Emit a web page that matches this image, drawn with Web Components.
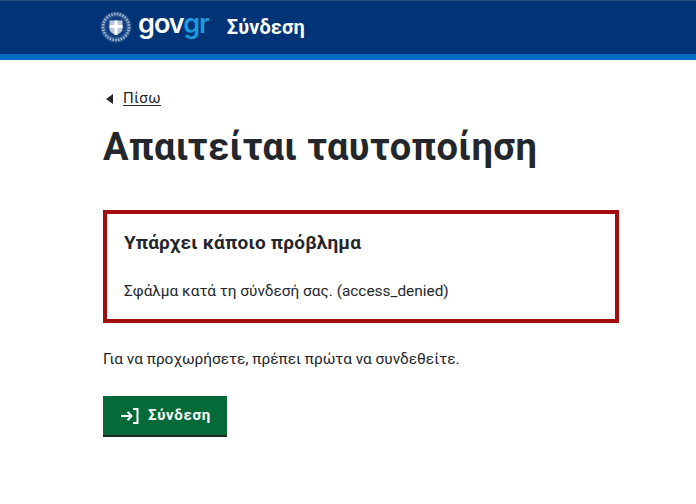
<!DOCTYPE html>
<html lang="el">
<head>
<meta charset="utf-8">
<title>Σύνδεση</title>
<style>
html, body { margin: 0; padding: 0; background: #fff; }
body { font-family: Roboto, "Noto Sans", sans-serif; color: #23262b; }
</style>
</head>
<body>
<gov-header title="Σύνδεση"></gov-header>
<gov-page>
	<gov-back>Πίσω</gov-back>
	<h1 slot="title">Απαιτείται ταυτοποίηση</h1>
	<gov-error heading="Υπάρχει κάποιο πρόβλημα">Σφάλμα κατά τη σύνδεσή σας. (access_denied)</gov-error>
	<gov-text>Για να προχωρήσετε, πρέπει πρώτα να συνδεθείτε.</gov-text>
	<gov-button>Σύνδεση</gov-button>
</gov-page>
<script>
const headerTemplate = document.createElement('template');
headerTemplate.innerHTML = `
<style>
:host {
	display: block;
	background: #003476;
	border-top: 1px solid #2a4d80;
	border-bottom: 6px solid #046ec5;
}
.bar {
	height: 53px;
	box-sizing: border-box;
	padding-left: 100px;
	display: flex;
	align-items: center;
}
svg { flex: none; display: block; margin-top: -1px; }
.logo {
	margin-left: 6px;
	margin-top: -8px;
	font: 600 27px/1 Inter, "Noto Sans", sans-serif;
	letter-spacing: -1px;
	color: #fff;
}
.logo span { color: #1c9bdc; }
.title {
	margin-left: 18px;
	margin-top: -1px;
	font: 700 20px/1 Roboto, sans-serif;
	letter-spacing: .1px;
	color: #fff;
}
</style>
<div class="bar">
	<svg width="32" height="32" viewBox="0 0 32 32" aria-hidden="true">
		<circle cx="16" cy="16" r="15.500" fill="#2c5590"/>
		<circle cx="16" cy="16" r="13" fill="none" stroke="#9db2cf" stroke-width="2.600" stroke-dasharray="1.600 1.200"/>
		<circle cx="16" cy="16" r="10.500" fill="#123f7e"/>
		<path d="M9.500 9.500h13v8.500c0 2.800-3 4.600-6.500 6-3.500-1.400-6.500-3.200-6.500-6z" fill="#b9c8dd"/>
		<path d="M14.500 9.500h3v4.500h5v3h-5v7h-3v-7h-5v-3h5z" fill="#fff"/>
	</svg>
	<div class="logo">gov<span>gr</span></div>
	<div class="title"></div>
</div>
`;

class GovHeader extends HTMLElement {
	connectedCallback() {
		if (!this.shadowRoot) {
			this.attachShadow({ mode: 'open' });
			this.shadowRoot.appendChild(headerTemplate.content.cloneNode(true));
			this.shadowRoot.querySelector('.title').textContent = this.getAttribute('title');
		}
	}
}

const pageTemplate = document.createElement('template');
pageTemplate.innerHTML = `
<style>
:host {
	display: block;
	padding: 29px 77px 0 103px;
}
.content {
	display: flex;
	flex-direction: column;
	align-items: stretch;
}
::slotted(h1) {
	margin: 14px 0 37px;
	font: 700 38px/52px Roboto, sans-serif;
	letter-spacing: .4px;
	color: #23262b;
}
</style>
<div class="content">
	<slot name="back"></slot>
	<slot name="title"></slot>
	<slot></slot>
</div>
`;

class GovPage extends HTMLElement {
	connectedCallback() {
		if (!this.shadowRoot) {
			this.attachShadow({ mode: 'open' });
			this.shadowRoot.appendChild(pageTemplate.content.cloneNode(true));
			this.querySelector('gov-back').slot = 'back';
		}
	}
}

const backTemplate = document.createElement('template');
backTemplate.innerHTML = `
<style>
:host {
	display: flex;
	align-items: center;
	height: 18px;
	font: 400 15px/18px Roboto, sans-serif;
	letter-spacing: .4px;
	color: #23262b;
}
.arrow {
	width: 0;
	height: 0;
	margin: 1px 10px 0 3px;
	border-top: 5.500px solid transparent;
	border-bottom: 5.500px solid transparent;
	border-right: 7px solid #23262b;
}
a { color: inherit; text-decoration: underline; text-underline-offset: 2px; }
</style>
<span class="arrow"></span><a><slot></slot></a>
`;

class GovBack extends HTMLElement {
	connectedCallback() {
		if (!this.shadowRoot) {
			this.attachShadow({ mode: 'open' });
			this.shadowRoot.appendChild(backTemplate.content.cloneNode(true));
		}
	}
}

const errorTemplate = document.createElement('template');
errorTemplate.innerHTML = `
<style>
:host {
	display: block;
	box-sizing: border-box;
	height: 113px;
	padding: 17px 17px 0;
	border: 4px solid #a50c10;
}
h2 {
	margin: 0 0 25px;
	font: 700 19px/24px Roboto, sans-serif;
	letter-spacing: .2px;
	color: #23262b;
}
p {
	margin: 0;
	font: 400 15.400px/22px Roboto, sans-serif;
	color: #23262b;
}
</style>
<h2></h2>
<p><slot></slot></p>
`;

class GovError extends HTMLElement {
	connectedCallback() {
		if (!this.shadowRoot) {
			this.attachShadow({ mode: 'open' });
			this.shadowRoot.appendChild(errorTemplate.content.cloneNode(true));
			this.shadowRoot.querySelector('h2').textContent = this.getAttribute('heading');
		}
	}
}

const textTemplate = document.createElement('template');
textTemplate.innerHTML = `
<style>
:host {
	display: block;
	margin-top: 25px;
	font: 400 15.400px/22px Roboto, sans-serif;
	color: #23262b;
}
</style>
<slot></slot>
`;

class GovText extends HTMLElement {
	connectedCallback() {
		if (!this.shadowRoot) {
			this.attachShadow({ mode: 'open' });
			this.shadowRoot.appendChild(textTemplate.content.cloneNode(true));
		}
	}
}

const buttonTemplate = document.createElement('template');
buttonTemplate.innerHTML = `
<style>
:host {
	display: flex;
	align-items: center;
	align-self: flex-start;
	box-sizing: border-box;
	width: 124px;
	height: 41px;
	margin-top: 26px;
	padding-left: 18px;
	gap: 9px;
	background: #046a38;
	border-bottom: 2px solid #1c2b24;
	font: 700 15px/1 Roboto, sans-serif;
	letter-spacing: .7px;
	color: #fff;
}
svg { display: block; flex: none; }
</style>
<svg width="18" height="16" viewBox="0 0 18 16" fill="none" stroke="#fff" stroke-width="2" aria-hidden="true">
	<path d="M0 8h10M6.500 3.800 10.500 8 6.500 12.200"/>
	<path d="M12 1h4.500v14H12"/>
</svg>
<slot></slot>
`;

class GovButton extends HTMLElement {
	connectedCallback() {
		if (!this.shadowRoot) {
			this.attachShadow({ mode: 'open' });
			this.shadowRoot.appendChild(buttonTemplate.content.cloneNode(true));
		}
	}
}

window.customElements.define('gov-header', GovHeader);
window.customElements.define('gov-page', GovPage);
window.customElements.define('gov-back', GovBack);
window.customElements.define('gov-error', GovError);
window.customElements.define('gov-text', GovText);
window.customElements.define('gov-button', GovButton);
</script>
</body>
</html>
